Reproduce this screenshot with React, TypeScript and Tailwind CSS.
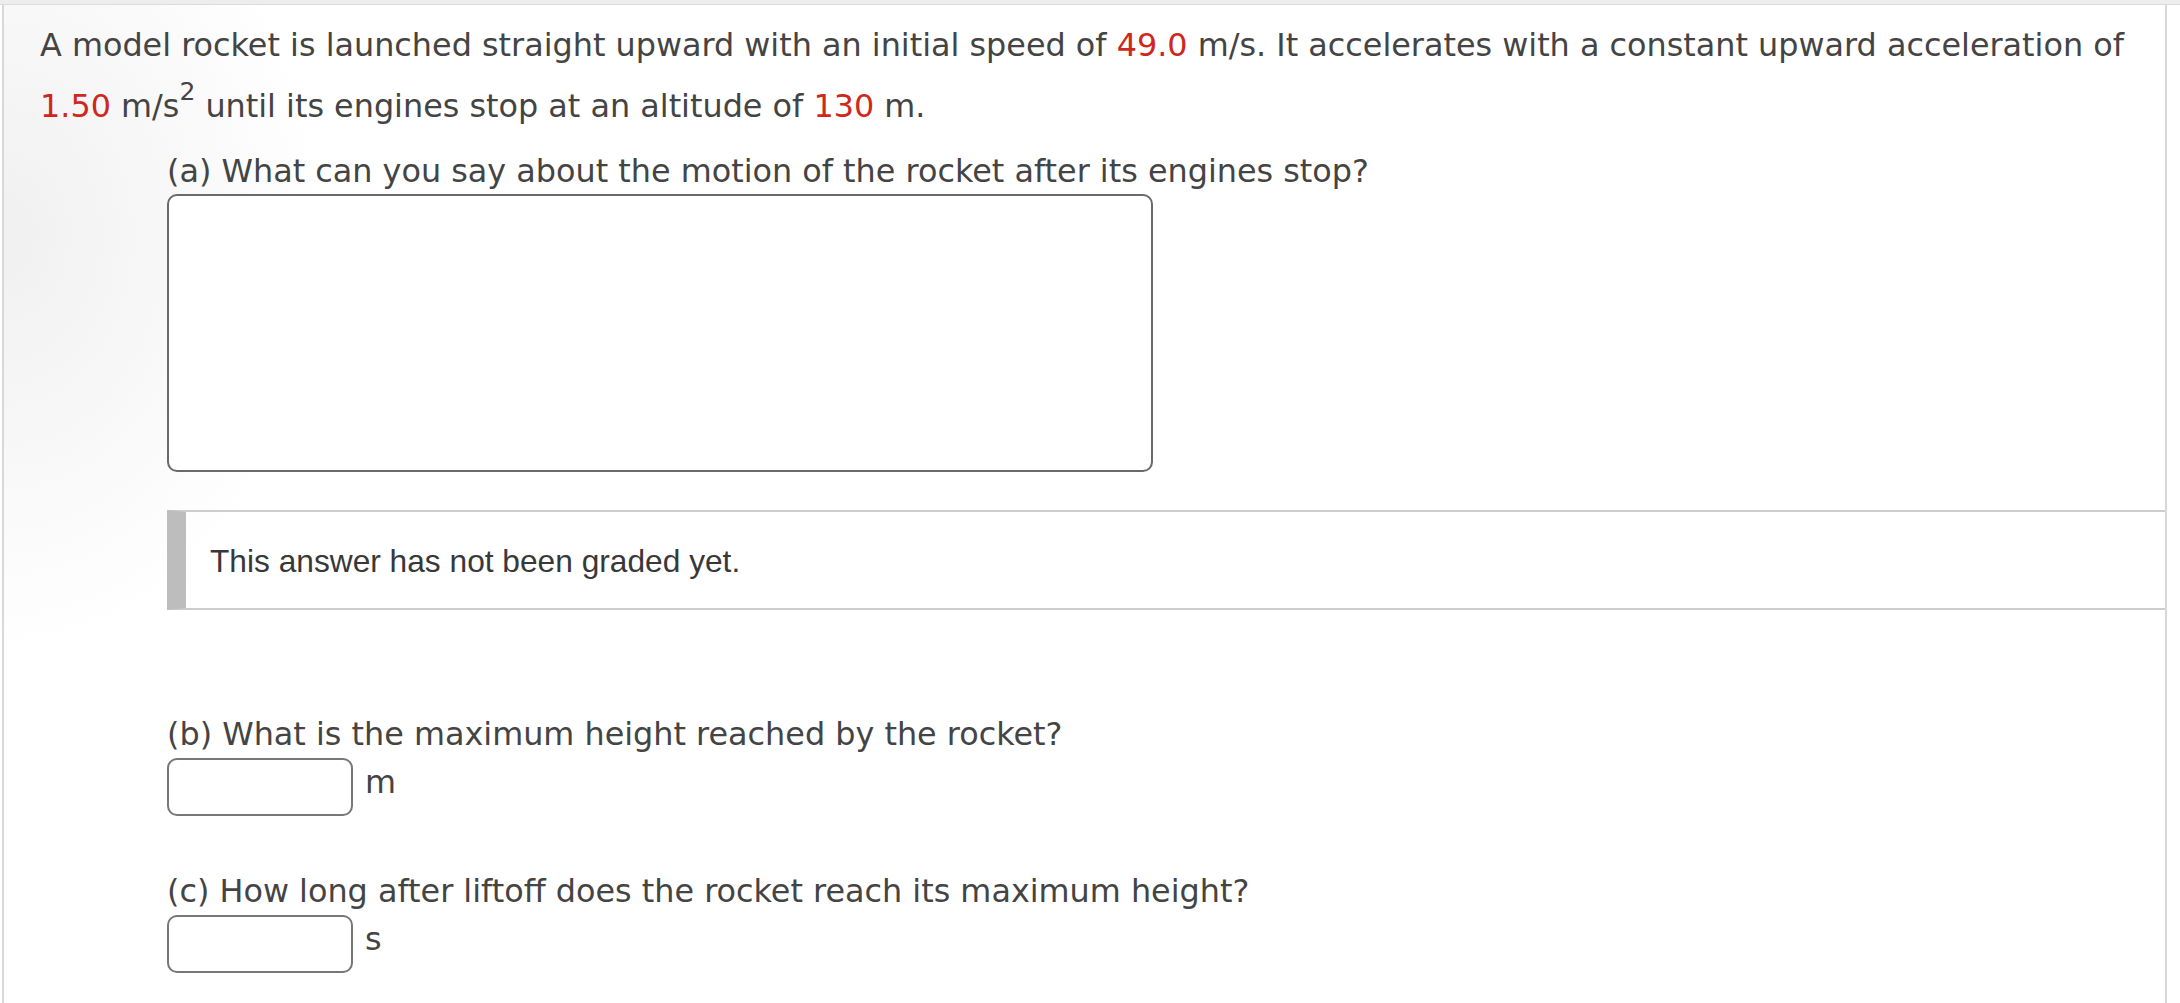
import React from 'react';

const red = 'text-[#d0271d]';

function AnswerInput({ unit }: { unit: string }) {
  return (
    <div className="flex items-center mt-[4px]">
      <input
        type="text"
        className="w-[186px] h-[58px] border-2 border-[#777777] rounded-[10px] bg-white outline-none"
      />
      <span className="ml-[12px] pb-[8px] leading-none">{unit}</span>
    </div>
  );
}

export default function App() {
  return (
    <div className="min-h-screen bg-white font-['DejaVu_Sans','Verdana',sans-serif] text-[31.85px] text-[#444444]">
      {/* top strip */}
      <div className="h-[5px] bg-[#ededed] border-b border-[#dcdcdc]" />

      <div className="ml-[2px] mr-[13px] min-h-[998px] border-x-2 border-[#d8d8d8] pl-[36px] pt-[10px] bg-[radial-gradient(ellipse_320px_420px_at_0px_230px,#f0f0f0,#ffffff)]">
        <p className="leading-[61px]">
          A model rocket is launched straight upward with an initial speed of{' '}
          <span className={red}>49.0</span> m/s. It accelerates with a constant upward acceleration of
          <br />
          <span className={red}>1.50</span> m/s
          <sup className="text-[25px] leading-none -top-[17px]">2</sup> until its engines stop at an altitude of{' '}
          <span className={red}>130</span> m.
        </p>

        <div className="ml-[127px]">
          {/* part a */}
          <div className="mt-[14px] leading-[40px]">
            (a) What can you say about the motion of the rocket after its engines stop?
          </div>
          <textarea className="block mt-[3px] w-[986px] h-[278px] border-2 border-[#6a6a6a] rounded-[10px] bg-white resize-none outline-none" />

          <div className="mt-[38px] h-[100px] flex items-center border-y-2 border-[#cdcdcd] border-l-[19px] border-l-[#bdbdbd] pl-[24px]">
            <span className="font-['Liberation_Sans','Helvetica',sans-serif] text-[31.7px] leading-none text-[#383838] mt-[4px]">
              This answer has not been graded yet.
            </span>
          </div>

          {/* part b */}
          <div className="mt-[104px] leading-[40px]">(b) What is the maximum height reached by the rocket?</div>
          <AnswerInput unit="m" />

          {/* part c */}
          <div className="mt-[55px] leading-[40px]">
            (c) How long after liftoff does the rocket reach its maximum height?
          </div>
          <AnswerInput unit="s" />
        </div>
      </div>
    </div>
  );
}
